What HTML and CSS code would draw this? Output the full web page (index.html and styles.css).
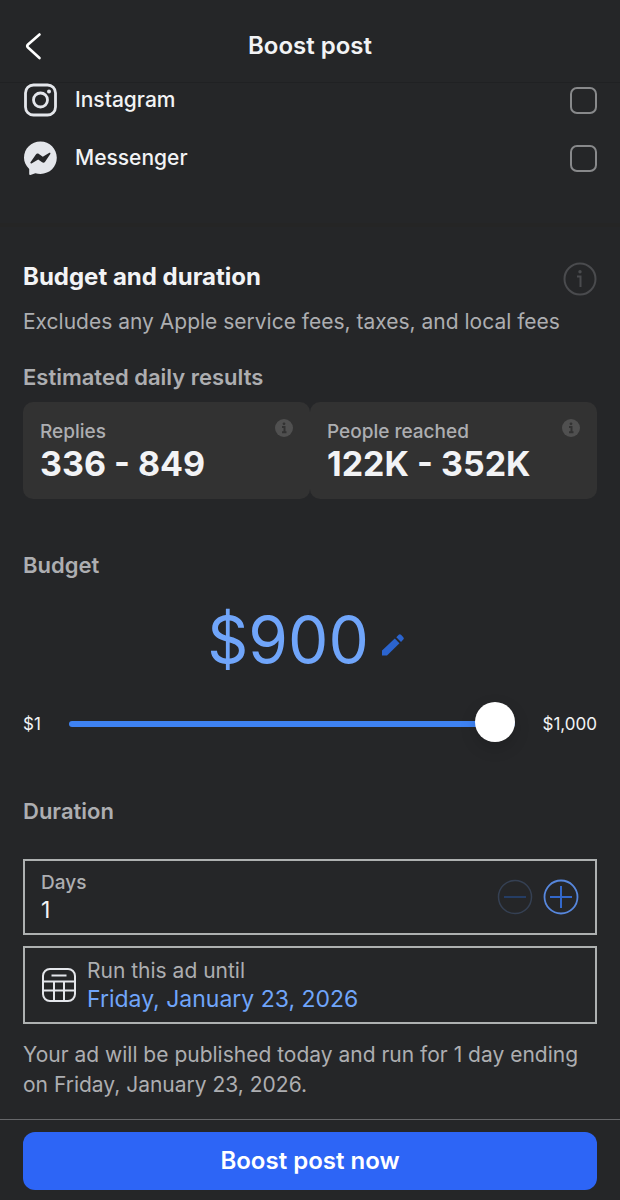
FILE: index.html
```html
<!DOCTYPE html>
<html lang="en">
<head>
    <meta charset="UTF-8">
    <meta name="viewport" content="width=device-width, initial-scale=1.0">
    <title>Boost post</title>
    <link rel="stylesheet" href="styles.css">
</head>
<body>
    <header class="top-bar">
        <button type="button" class="icon-button" aria-label="Back">
            <svg width="20" height="30" viewBox="0 0 20 30" fill="none" stroke="#fff" stroke-width="2.6" stroke-linecap="round" stroke-linejoin="round"><path d="M16.500 3.500 5 13.500q-1.500 1.500 0 3L16.500 27"/></svg>
        </button>
        <h1>Boost post</h1>
    </header>
    <main>
        <section class="platforms">
            <div class="platform">
                <svg width="34" height="34" viewBox="0 0 34 34" fill="none" stroke="#e4e6eb" stroke-width="2.800"><rect x="2.500" y="2" width="30" height="30" rx="8"/><circle cx="17.500" cy="17" r="7"/><circle cx="26" cy="8.500" r="2" fill="#e4e6eb" stroke="none"/></svg>
                <label for="instagram">Instagram</label>
                <input type="checkbox" id="instagram" class="check">
            </div>
            <div class="platform">
                <svg width="34" height="34" viewBox="0 0 34 34"><path fill="#e4e6eb" d="M17.500.5C8.300.5 1 7.600 1 16.800c0 4.200 1.700 7.700 5.200 11.100v5.200c0 .7.600 1 1.200.8l5-1.700c1.700.5 3.300.7 5.100.7 9.200 0 16.300-7 16.300-16.100S26.700.5 17.500.5z"/><path fill="#252628" d="M7.500 21.300l5.400-7.900c.7-1.100 1.900-1.300 3-.5l3.900 2.800 6.600-3.900c.7-.4 1.400.4.900 1.100l-5.200 7.800c-.7 1.100-2 1.300-3 .5l-3.900-2.800-6.700 4c-.7.400-1.500-.4-1-1.100z"/></svg>
                <label for="messenger">Messenger</label>
                <input type="checkbox" id="messenger" class="check">
            </div>
        </section>

        <section class="budget-section">
            <div class="section-title">
                <h2>Budget and duration</h2>
                <button type="button" class="icon-button" aria-label="About budget and duration">
                    <svg width="34" height="34" viewBox="0 0 34 34" fill="none" stroke="#4a4b4e" stroke-width="2"><circle cx="17" cy="17" r="15.500"/><path d="M14 14.500h3.500V25"/><circle cx="17" cy="9.800" r="1.700" fill="#4a4b4e" stroke="none"/></svg>
                </button>
            </div>
            <p class="note">Excludes any Apple service fees, taxes, and local fees</p>

            <h3>Estimated daily results</h3>
            <div class="results">
                <div class="result">
                    <div class="result-label">
                        <span>Replies</span>
                        <svg width="18" height="18" viewBox="0 0 18 18"><circle cx="9" cy="9" r="9" fill="#505050"/><circle cx="9" cy="4.800" r="1.400" fill="#323232"/><path d="M7 8h2.500v5M7 13.200h4.500" fill="none" stroke="#323232" stroke-width="2"/></svg>
                    </div>
                    <strong>336 - 849</strong>
                </div>
                <div class="result">
                    <div class="result-label">
                        <span>People reached</span>
                        <svg width="18" height="18" viewBox="0 0 18 18"><circle cx="9" cy="9" r="9" fill="#505050"/><circle cx="9" cy="4.800" r="1.400" fill="#323232"/><path d="M7 8h2.500v5M7 13.200h4.500" fill="none" stroke="#323232" stroke-width="2"/></svg>
                    </div>
                    <strong>122K - 352K</strong>
                </div>
            </div>

            <h3 id="budget-label">Budget</h3>
            <div class="amount">
                <span>$900</span>
                <button type="button" class="icon-button edit-button" aria-label="Edit budget">
                    <svg width="24" height="24" viewBox="0 0 24 24" fill="#2b64cf"><path d="M1 22.500v-5L13.800 5.500l4.700 4.700L6 22.500z"/><path d="M15.300 4.200l2.400-2.400a1.600 1.600 0 0 1 2.300 0L22.300 4.200a1.600 1.600 0 0 1 0 2.300L20 8.900z"/></svg>
                </button>
            </div>
            <div class="slider">
                <span>$1</span>
                <input type="range" min="1" max="900" value="900" aria-labelledby="budget-label">
                <span>$1,000</span>
            </div>

            <h3>Duration</h3>
            <div class="box">
                <div class="box-text">
                    <label for="days">Days</label>
                    <input type="text" id="days" inputmode="numeric" value="1">
                </div>
                <div class="stepper">
                    <button type="button" class="icon-button" aria-label="Fewer days" disabled>
                        <svg width="36" height="36" viewBox="0 0 36 36" fill="none"><circle cx="18" cy="18" r="16.500" stroke="#354053" stroke-width="1.500"/><path d="M7 18h22" stroke="#253d64" stroke-width="2"/></svg>
                    </button>
                    <button type="button" class="icon-button" aria-label="More days">
                        <svg width="36" height="36" viewBox="0 0 36 36" fill="none"><circle cx="18" cy="18" r="16.500" stroke="#5787dd" stroke-width="1.800"/><path d="M7 18h22M18 7v22" stroke="#3368cb" stroke-width="2"/></svg>
                    </button>
                </div>
            </div>
            <button type="button" class="box date-box">
                <svg width="36" height="36" viewBox="0 0 36 36" fill="none" stroke="#e4e6eb" stroke-width="2"><rect x="2" y="2" width="32" height="32" rx="7"/><path d="M10.500 8.500h15M2 14.500h32M2 23.500h32M13 14.500V34M23 14.500V34"/></svg>
                <span class="box-text">
                    <span class="date-label">Run this ad until</span>
                    <span class="date-value">Friday, January 23, 2026</span>
                </span>
            </button>
            <p class="note">Your ad will be published today and run for 1 day ending on Friday, January 23, 2026.</p>
        </section>
    </main>
    <footer>
        <button type="button" class="boost-button">Boost post now</button>
    </footer>
</body>
</html>
```
FILE: styles.css
```css
* {
    box-sizing: border-box;
}
body {
    font-family: Inter, "Liberation Sans", sans-serif;
    background-color: #252628;
    color: #f2f3f5;
    font-size: 21px;
    line-height: 30px;
    margin: 0;
    min-height: 100vh;
    display: flex;
    flex-direction: column;
}
h1, h2, h3, p {
    margin: 0;
}
svg {
    display: block;
    flex: none;
}
button, input {
    font: inherit;
    color: inherit;
    margin: 0;
}
.icon-button {
    background: none;
    border: none;
    padding: 0;
    cursor: pointer;
}

/* Header */
.top-bar {
    display: grid;
    grid-template-columns: 40px 1fr 40px;
    align-items: center;
    padding: 31px 23px 21px;
    border-bottom: 1px solid #202123;
}
.top-bar h1 {
    font-size: 24px;
    font-weight: 600;
    text-align: center;
}

/* Platforms */
.platforms {
    display: flex;
    flex-direction: column;
    gap: 24px;
    padding: 0 23px 48px;
    border-bottom: 4px solid #252525;
}
.platform {
    display: flex;
    align-items: center;
    gap: 18px;
    height: 34px;
}
.platform label {
    flex: 1;
    font-weight: 500;
}
.check {
    appearance: none;
    width: 27px;
    height: 27px;
    border: 2px solid #88898b;
    border-radius: 7px;
}
.check:checked {
    background-color: #2d65f6;
}

/* Budget and duration */
.budget-section {
    padding: 35px 23px 19px;
}
.section-title {
    display: flex;
    justify-content: space-between;
    margin-bottom: 11px;
}
h2 {
    font-size: 24px;
    font-weight: 700;
}
h3 {
    font-size: 22px;
    font-weight: 600;
    color: #adaeb1;
}
.note {
    color: #adaeb1;
}
.note + h3 {
    margin-top: 25px;
}
.results {
    display: grid;
    grid-template-columns: 1fr 1fr;
    margin: 10px 0 51px;
}
.result {
    background-color: #323232;
    border-radius: 10px;
    padding: 17px;
}
.result-label {
    display: flex;
    justify-content: space-between;
    font-size: 19px;
    font-weight: 500;
    line-height: 26px;
    color: #adaeb1;
}
.result strong {
    display: block;
    font-size: 34px;
    font-weight: 700;
    line-height: 37px;
}
.amount {
    display: flex;
    justify-content: center;
    align-items: center;
    gap: 12px;
    margin-top: 20px;
    padding-right: 8px;
    font-size: 64px;
    line-height: 80px;
    color: #70a5fa;
}
.edit-button {
    margin-top: 10px;
}
.slider {
    display: flex;
    align-items: center;
    gap: 28px;
    margin: 24px 0 52px;
    font-size: 17px;
}
.slider input {
    flex: 1;
    min-width: 0;
    height: 40px;
    appearance: none;
    background: none;
}
.slider input::-webkit-slider-runnable-track {
    height: 6px;
    border-radius: 3px;
    background-color: #3e82f2;
}
.slider input::-webkit-slider-thumb {
    appearance: none;
    width: 40px;
    height: 40px;
    margin-top: -19px;
    border-radius: 50%;
    background-color: white;
    box-shadow: 0 6px 16px rgba(0, 0, 0, 0.15);
}
.box {
    display: flex;
    align-items: center;
    justify-content: space-between;
    width: 100%;
    padding: 9px 16px;
    border: 2px solid #aeb1b1;
    margin-top: 33px;
}
.box-text {
    display: flex;
    flex-direction: column;
    text-align: left;
}
.box label {
    font-size: 19px;
    font-weight: 500;
    line-height: 26px;
    color: #adaeb1;
}
.box input {
    width: 120px;
    height: 28px;
    padding: 0;
    border: none;
    background: none;
    font-size: 23px;
}
.stepper {
    display: flex;
    gap: 10px;
}
.date-box {
    justify-content: flex-start;
    gap: 10px;
    background: none;
    margin: 11px 0 16px;
    cursor: pointer;
    line-height: 28px;
}
.date-label {
    color: #adaeb1;
}
.date-value {
    font-size: 23px;
    color: #70a5fa;
}

/* Footer */
footer {
    padding: 12px 23px 10px;
    border-top: 1px solid #66676a;
}
.boost-button {
    width: 100%;
    height: 58px;
    border: none;
    border-radius: 12px;
    background-color: #2d65f6;
    color: white;
    font-size: 24px;
    font-weight: 600;
    cursor: pointer;
}
```
